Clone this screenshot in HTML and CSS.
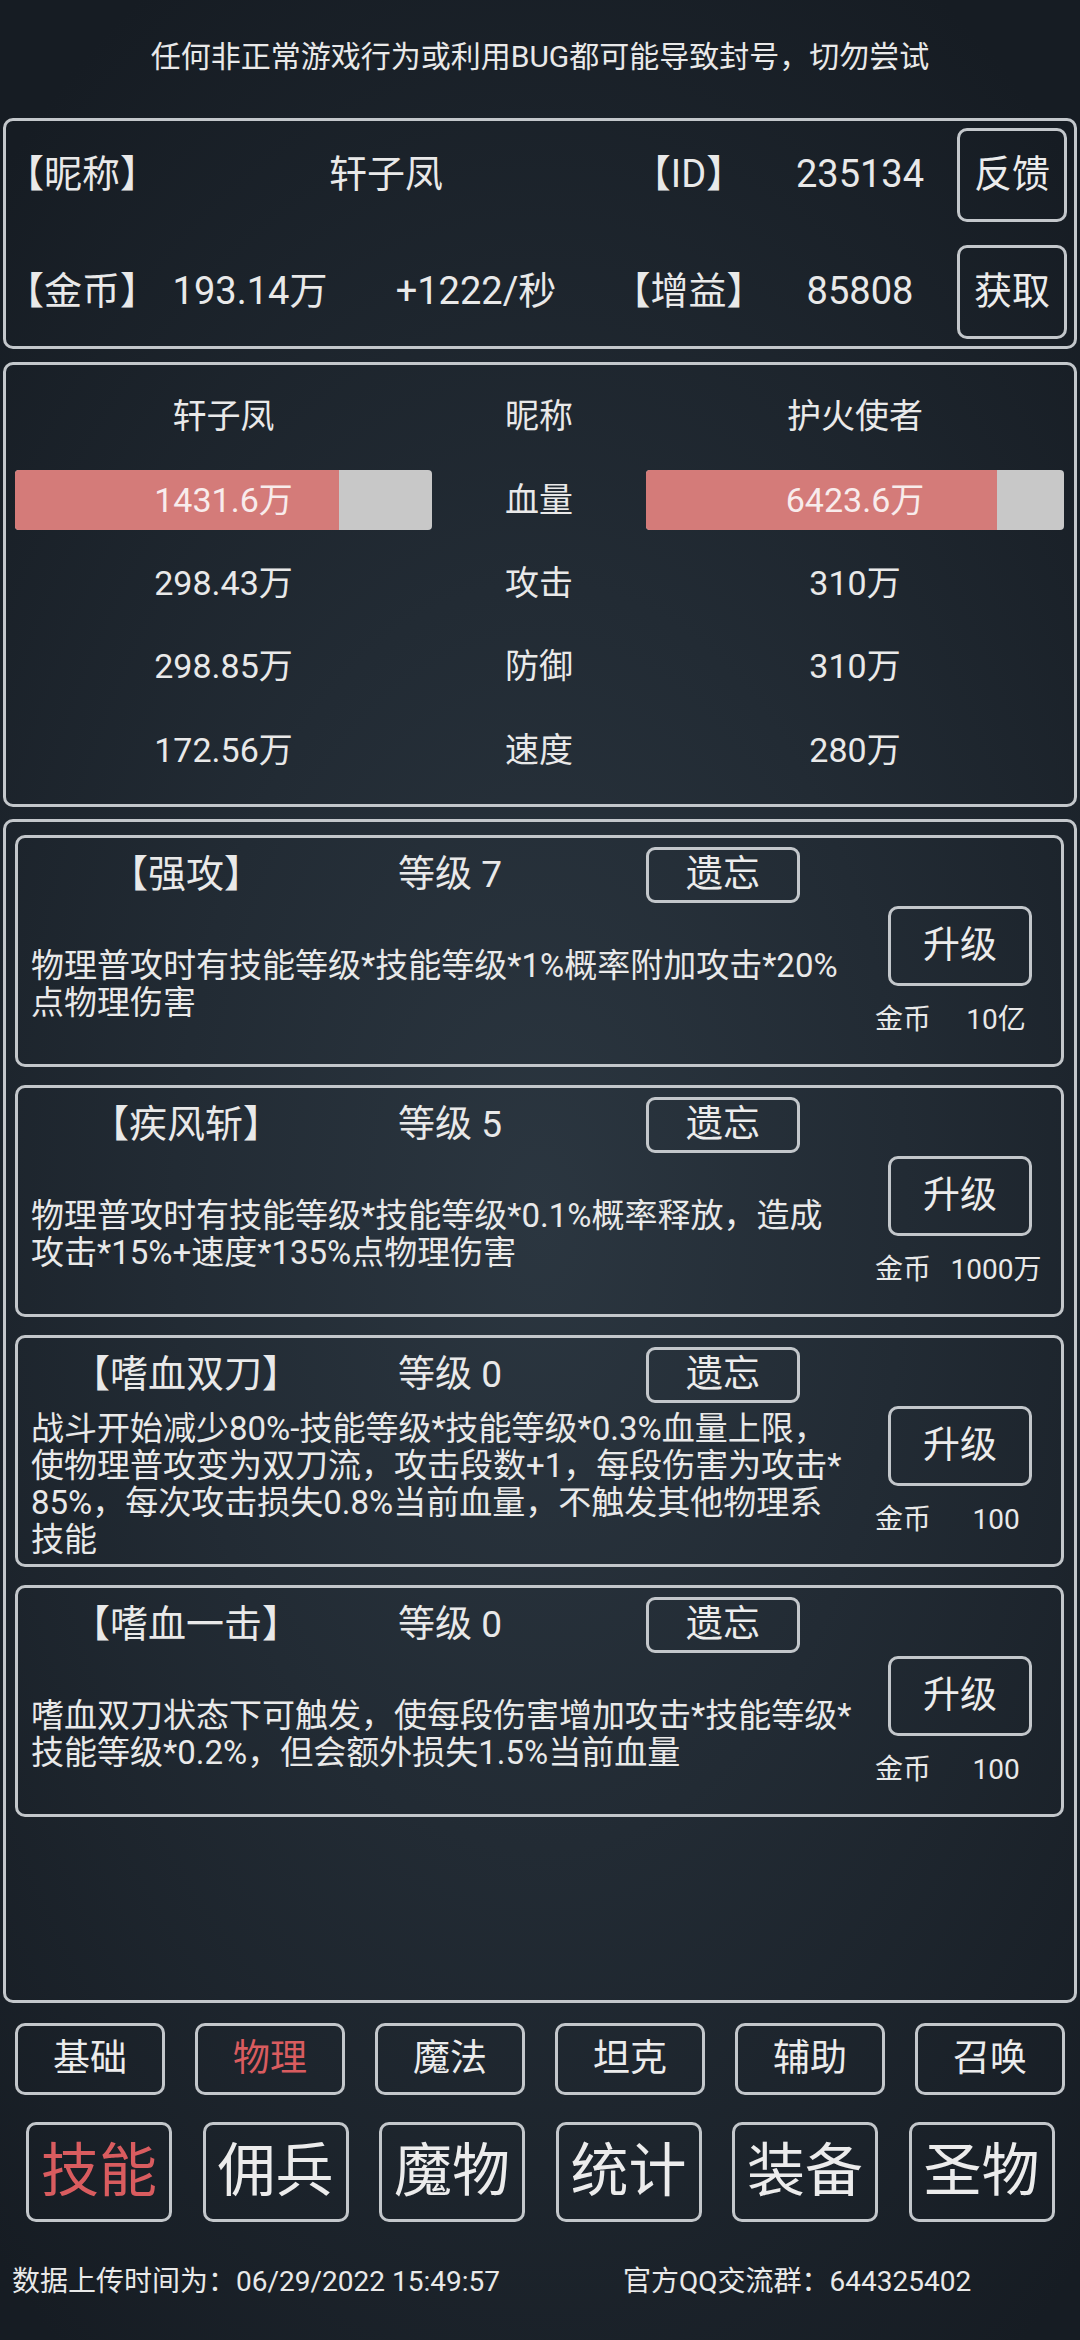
FILE: index.html
```html
<!DOCTYPE html>
<html lang="zh-CN">

<head>
    <meta charset="UTF-8">
    <meta name="viewport" content="width=device-width, initial-scale=1.0">
    <title>技能</title>
    <link rel="stylesheet" href="styles.css">
</head>

<body>
    <div class="screen">
        <p class="notice">任何非正常游戏行为或利用BUG都可能导致封号，切勿尝试</p>

        <div class="panel info">
            <span class="tag">【昵称】</span>
            <span class="val span2">轩子凤</span>
            <span class="val">【ID】</span>
            <span class="val">235134</span>
            <button class="btn info-btn">反馈</button>

            <span class="tag">【金币】</span>
            <span class="val">193.14万</span>
            <span class="val">+1222/秒</span>
            <span class="val">【增益】</span>
            <span class="val">85808</span>
            <button class="btn info-btn">获取</button>
        </div>

        <div class="panel stats">
            <span>轩子凤</span>
            <span>昵称</span>
            <span>护火使者</span>

            <div class="hp">
                <div class="hp-fill" style="width: 77.7%"></div>
                <span class="hp-text">1431.6万</span>
            </div>
            <span>血量</span>
            <div class="hp">
                <div class="hp-fill" style="width: 84%"></div>
                <span class="hp-text">6423.6万</span>
            </div>

            <span>298.43万</span>
            <span>攻击</span>
            <span>310万</span>

            <span>298.85万</span>
            <span>防御</span>
            <span>310万</span>

            <span>172.56万</span>
            <span>速度</span>
            <span>280万</span>
        </div>

        <div class="panel skills">
            <div class="skill">
                <div class="skill-head">
                    <span class="skill-name">【强攻】</span>
                    <span class="skill-level">等级 7</span>
                    <button class="btn forget">遗忘</button>
                </div>
                <div class="skill-body">
                    <p class="skill-desc">物理普攻时有技能等级*技能等级*1%概率附加攻击*20%<br>点物理伤害</p>
                    <div class="skill-up">
                        <button class="btn upgrade">升级</button>
                        <div class="cost"><span>金币</span><span class="cost-val">10亿</span></div>
                    </div>
                </div>
            </div>

            <div class="skill">
                <div class="skill-head">
                    <span class="skill-name">【疾风斩】</span>
                    <span class="skill-level">等级 5</span>
                    <button class="btn forget">遗忘</button>
                </div>
                <div class="skill-body">
                    <p class="skill-desc">物理普攻时有技能等级*技能等级*0.1%概率释放，造成<br>攻击*15%+速度*135%点物理伤害</p>
                    <div class="skill-up">
                        <button class="btn upgrade">升级</button>
                        <div class="cost"><span>金币</span><span class="cost-val">1000万</span></div>
                    </div>
                </div>
            </div>

            <div class="skill">
                <div class="skill-head">
                    <span class="skill-name">【嗜血双刀】</span>
                    <span class="skill-level">等级 0</span>
                    <button class="btn forget">遗忘</button>
                </div>
                <div class="skill-body">
                    <p class="skill-desc">战斗开始减少80%-技能等级*技能等级*0.3%血量上限，<br>使物理普攻变为双刀流，攻击段数+1，每段伤害为攻击*<br>85%，每次攻击损失0.8%当前血量，不触发其他物理系<br>技能</p>
                    <div class="skill-up">
                        <button class="btn upgrade">升级</button>
                        <div class="cost"><span>金币</span><span class="cost-val">100</span></div>
                    </div>
                </div>
            </div>

            <div class="skill">
                <div class="skill-head">
                    <span class="skill-name">【嗜血一击】</span>
                    <span class="skill-level">等级 0</span>
                    <button class="btn forget">遗忘</button>
                </div>
                <div class="skill-body">
                    <p class="skill-desc">嗜血双刀状态下可触发，使每段伤害增加攻击*技能等级*<br>技能等级*0.2%，但会额外损失1.5%当前血量</p>
                    <div class="skill-up">
                        <button class="btn upgrade">升级</button>
                        <div class="cost"><span>金币</span><span class="cost-val">100</span></div>
                    </div>
                </div>
            </div>
        </div>

        <div class="subtabs">
            <button class="btn subtab">基础</button>
            <button class="btn subtab active">物理</button>
            <button class="btn subtab">魔法</button>
            <button class="btn subtab">坦克</button>
            <button class="btn subtab">辅助</button>
            <button class="btn subtab">召唤</button>
        </div>

        <div class="maintabs">
            <button class="btn maintab active">技能</button>
            <button class="btn maintab">佣兵</button>
            <button class="btn maintab">魔物</button>
            <button class="btn maintab">统计</button>
            <button class="btn maintab">装备</button>
            <button class="btn maintab">圣物</button>
        </div>

        <div class="footer">
            <span class="upload">数据上传时间为：06/29/2022 15:49:57</span>
            <span>官方QQ交流群：644325402</span>
        </div>
    </div>
</body>

</html>
```

FILE: styles.css
```css
* {
    box-sizing: border-box;
    margin: 0;
    padding: 0;
}

html,
body {
    height: 100%;
}

body {
    font-family: Roboto, "Noto Sans CJK SC", sans-serif;
    line-height: 1.2;
    color: #e9e9e9;
    background: radial-gradient(ellipse 75% 60% at 50% 52%, #2b3640 0%, #222b34 45%, #161c23 100%);
}

.screen {
    padding: 0 3px;
}

.notice {
    height: 118px;
    padding-bottom: 4px;
    display: flex;
    justify-content: center;
    align-items: center;
    font-size: 30px;
}

.panel {
    border: 3px solid #c3c7cb;
    border-radius: 10px;
}

.btn {
    font-family: inherit;
    line-height: 1.2;
    color: #ececec;
    background: transparent;
    border: 3px solid #c3c7cb;
    border-radius: 10px;
    display: flex;
    justify-content: center;
    align-items: center;
}

/* player info */

.info {
    height: 231px;
    padding: 7px 7px 7px 0;
    display: grid;
    grid-template-columns: 154px 180px 272px 153px 190px 112px;
    grid-template-rows: 94px 94px;
    row-gap: 23px;
    align-items: center;
    font-size: 38px;
}

.info .val {
    text-align: center;
}

.info .span2 {
    grid-column: span 2;
}

.info-btn {
    margin-left: 2px;
    width: 110px;
    height: 94px;
    font-size: 38px;
}

/* battle stats */

.stats {
    margin-top: 13px;
    height: 445px;
    padding: 10px 10px 12px 9px;
    display: grid;
    grid-template-columns: 417px 214px 418px;
    grid-template-rows: repeat(5, 1fr);
    align-items: center;
    justify-items: center;
    font-size: 34px;
}

.hp {
    width: 100%;
    height: 60px;
    display: grid;
    background: #c8c8c8;
    border-radius: 4px;
    overflow: hidden;
}

.hp > * {
    grid-area: 1 / 1;
}

.hp-fill {
    background: #d47b79;
}

.hp-text {
    align-self: center;
    justify-self: center;
    color: #f8ecec;
}

/* skills */

.skills {
    margin-top: 12px;
    height: 1184px;
    padding: 13px 10px 0 9px;
    display: flex;
    flex-direction: column;
    gap: 18px;
}

.skill {
    height: 232px;
    border: 3px solid #c3c7cb;
    border-radius: 10px;
    padding-top: 9px;
}

.skill-head {
    height: 56px;
    display: flex;
    align-items: center;
}

.skill-name {
    width: 336px;
    text-align: center;
    font-size: 38px;
}

.skill-level {
    width: 292px;
    padding-left: 44px;
    font-size: 37px;
}

.forget {
    width: 154px;
    height: 56px;
    font-size: 37px;
    border-radius: 9px;
}

.skill-body {
    height: 161px;
    display: flex;
}

.skill-desc {
    flex: 1;
    align-self: center;
    padding-left: 13px;
    font-size: 33px;
    line-height: 37px;
}

.skill-up {
    width: 186px;
    padding-top: 3px;
}

.upgrade {
    margin-left: 13px;
    width: 144px;
    height: 80px;
    font-size: 37px;
}

.cost {
    margin-top: 17px;
    display: flex;
    font-size: 28px;
    line-height: 34px;
}

.cost-val {
    margin-left: 9px;
    width: 112px;
    text-align: center;
}

/* tabs */

.subtabs {
    margin-top: 20px;
    padding-left: 12px;
    display: flex;
    gap: 30px;
}

.subtab {
    width: 150px;
    height: 72px;
    font-size: 37px;
}

.maintabs {
    margin-top: 27px;
    padding-left: 23px;
    display: flex;
    gap: 30.5px;
}

.maintab {
    width: 146px;
    height: 100px;
    font-size: 58px;
}

.active {
    color: #d95c5f;
}

.footer {
    margin-top: 30px;
    height: 60px;
    padding-left: 9px;
    display: flex;
    align-items: center;
    font-size: 28px;
}

.upload {
    width: 611px;
}
```
